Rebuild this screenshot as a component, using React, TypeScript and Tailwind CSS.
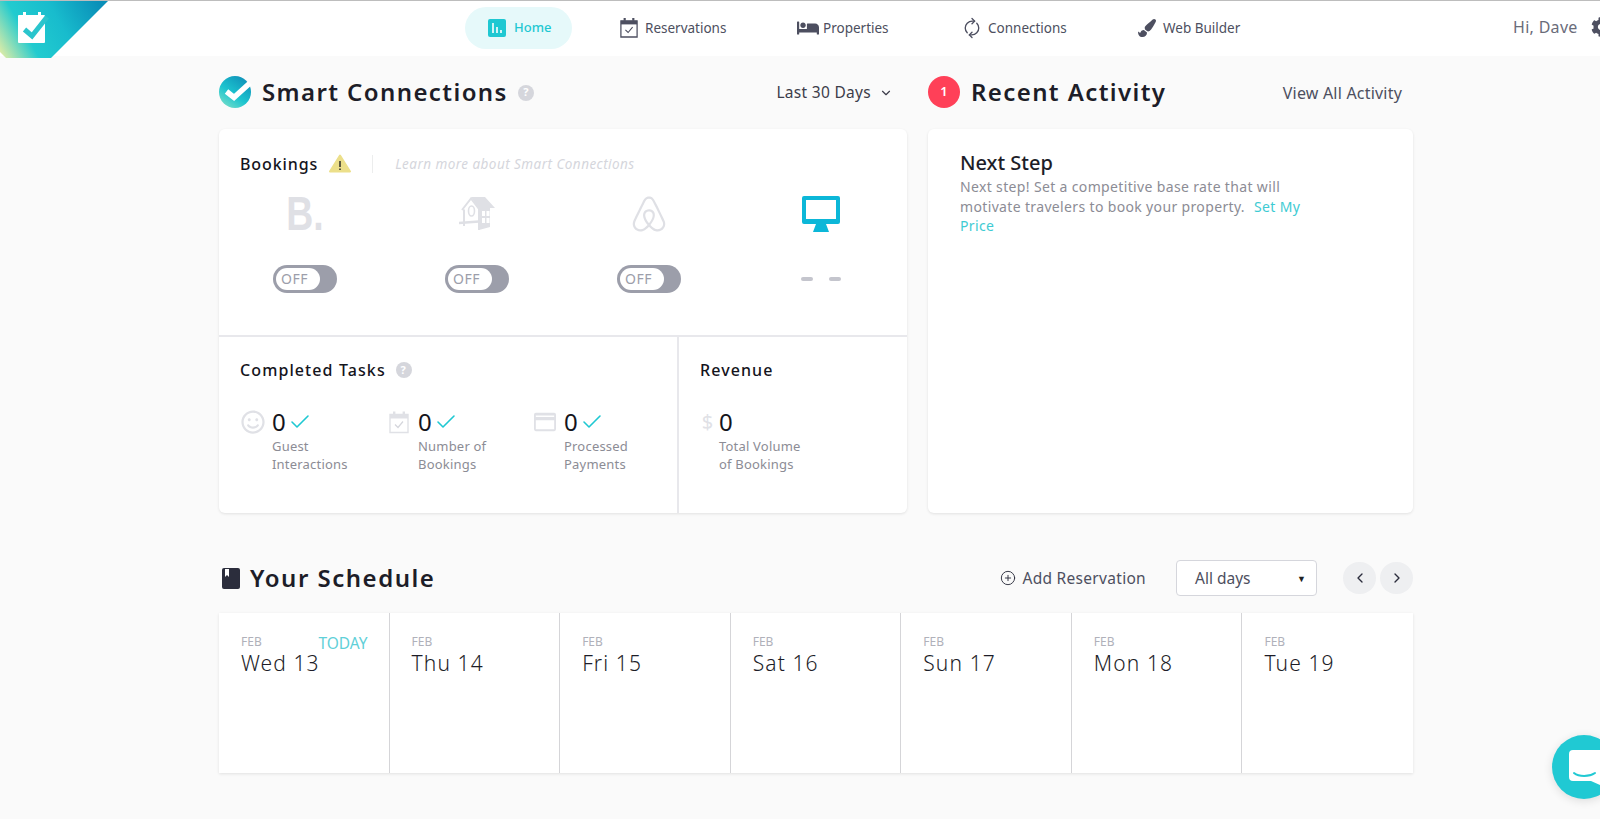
import React from "react";
import { FaAirbnb, FaBed, FaCog, FaPaintBrush, FaRegSmile } from "react-icons/fa";
import { Check, ChevronDown, ChevronLeft, ChevronRight, CirclePlus, RefreshCw } from "lucide-react";

const Help = ({ size = "w-4 h-4 text-[11px]" }: { size?: string }) => (
  <span className={`${size} rounded-full bg-[#d5d6dc] text-white font-bold flex items-center justify-center`}>?</span>
);

const CalIcon = ({ color, check }: { color: string; check: string }) => (
  <svg viewBox="0 0 20 22" className="w-full h-full">
    <path d="M4 0h2.4v3H4zM13.6 0H16v3h-2.4z" fill={color} />
    <path d="M1 3h18v18H1z" fill="none" stroke={color} strokeWidth="1.4" />
    <path d="M1 3h18v4H1z" fill={color} />
    <path d="M6 13l3 3 5-6" fill="none" stroke={check} strokeWidth="1.2" />
  </svg>
);

const Toggle = () => (
  <div className="w-16 h-7 rounded-full bg-[#9c9eaa] p-[3px] flex">
    <div className="w-[44px] h-[22px] rounded-full bg-white text-[#9c9eaa] text-[14px] leading-[22px] pl-[5px] tracking-[0.5px]">OFF</div>
  </div>
);

const Stat = ({ icon, label }: { icon: React.ReactNode; label: [string, string] }) => (
  <div className="flex gap-[7px]">
    <div className="w-[24px] h-[24px] flex items-center justify-center text-[#e0e1e6] mt-[1px]">{icon}</div>
    <div>
      <div className="flex items-center h-[26px] text-[24px] leading-[26px] text-[#14141c]">
        0
        <Check className="w-[24px] h-[24px] ml-[2px] text-[#1fc8d2]" strokeWidth={1.6} />
      </div>
      <div className="text-[13px] leading-[18px] tracking-[0.2px] text-[#8c8c95] mt-[2px] whitespace-nowrap">
        {label[0]}
        <br />
        {label[1]}
      </div>
    </div>
  </div>
);

const days = ["Wed 13", "Thu 14", "Fri 15", "Sat 16", "Sun 17", "Mon 18", "Tue 19"];

const Logo = () => (
  <svg viewBox="0 0 108 57" className="w-[108px] h-[57px] shrink-0">
    <defs>
      <linearGradient id="lg" gradientUnits="userSpaceOnUse" x1="0" y1="50" x2="95" y2="-5">
        <stop offset="0" stopColor="#d8eba8" />
        <stop offset="0.28" stopColor="#22cbcf" />
        <stop offset="0.6" stopColor="#18bccd" />
        <stop offset="1" stopColor="#0a8fb8" />
      </linearGradient>
    </defs>
    <path d="M0 0H108L59 49L51 57H6L0 51Z" fill="url(#lg)" />
    <path d="M20 14h3v-3h3v3h12v-3h3v3h3a1 1 0 0 1 1 1v26a1 1 0 0 1-1 1H19a1 1 0 0 1-1-1V15a1 1 0 0 1 1-1z" fill="#fff" />
    <path d="M24.5 28.5L32 35L47 16" fill="none" stroke="#2ac5cd" strokeWidth="5" />
  </svg>
);

const NavItem = ({ icon, label, w }: { icon: React.ReactNode; label: string; w: string }) => (
  <div className={`flex items-center gap-[7px] text-[13.5px] text-[#4d4f60] ${w}`}>
    {icon}
    <span>{label}</span>
  </div>
);

export default function App() {
  return (
    <div className="h-[819px] overflow-hidden relative bg-[#fafafa] font-['Noto_Sans',sans-serif]">
      <header className="h-[56px] bg-white border-t border-[#bdbdbd] flex items-start">
        <Logo />
        <nav className="ml-[357px] mt-[6px] flex items-center h-[42px]">
          <div className="w-[107px] h-[42px] rounded-full bg-[#e6f9fa] flex items-center pl-[23px] gap-[8px] text-[13px] font-medium text-[#1fc8d2]">
            <svg viewBox="0 0 18 18" className="w-[18px] h-[18px]">
              <rect width="18" height="18" rx="2" fill="#1fc8d2" />
              <path d="M5 4v10M9 8v6M13 11v3" stroke="#fff" strokeWidth="1.6" />
            </svg>
            <span>Home</span>
          </div>
          <NavItem w="ml-[48px] w-[177px]" label="Reservations" icon={<span className="w-[18px] h-[20px] block"><CalIcon color="#4d4f60" check="#4d4f60" /></span>} />
          <NavItem w="w-[166px]" label="Properties" icon={<FaBed className="w-[22px] h-[18px] -mr-[3px]" />} />
          <NavItem w="w-[175px]" label="Connections" icon={<RefreshCw className="w-[18px] h-[18px] -rotate-45" strokeWidth={1.8} />} />
          <NavItem w="" label="Web Builder" icon={<FaPaintBrush className="w-[18px] h-[18px]" />} />
        </nav>
        <div className="absolute left-[1513px] top-[6px] h-[42px] flex items-center gap-[13px] text-[16px] tracking-[0.3px] text-[#6a6c7a] whitespace-nowrap">
          <span>Hi, Dave</span>
          <FaCog className="w-[20px] h-[20px] text-[#4d4f60] shrink-0" />
        </div>
      </header>

      <main className="ml-[219px] w-[1194px]">
        <div className="flex gap-[21px]">
          <section className="w-[688px]">
            <div className="h-[73px] flex items-center">
              <svg viewBox="0 0 32 32" className="w-[32px] h-[32px] overflow-visible -mt-[2px]">
                <defs>
                  <linearGradient id="sc" x1="0.1" y1="1" x2="0.8" y2="0">
                    <stop offset="0" stopColor="#7fe0c8" />
                    <stop offset="0.45" stopColor="#1cc4cf" />
                    <stop offset="1" stopColor="#0f8fb8" />
                  </linearGradient>
                </defs>
                <circle cx="16" cy="16" r="16" fill="url(#sc)" />
                <path d="M7.5 15.5L15 21.5L31 7" fill="none" stroke="#fff" strokeWidth="5.5" />
              </svg>
              <h1 className="ml-[11px] -mt-[2px] text-[24px] font-semibold tracking-[1.4px] text-[#1d1d28]">Smart Connections</h1>
              <Help size="ml-[10px] w-4 h-4 text-[11px]" />
              <div className="ml-auto mr-[14px] flex items-center gap-[8px] text-[15.5px] text-[#3c3d4a] tracking-[0.3px]">
                Last 30 Days <ChevronDown className="w-[14px] h-[14px]" />
              </div>
            </div>
            <div className="h-[384px] bg-white rounded-[6px] shadow-[0_1px_3px_rgba(0,0,0,0.1)] flex flex-col">
              <div className="h-[208px] border-b-2 border-[#e8e8ec] shrink-0">
                <div className="flex items-center pl-[21px] pt-[23px] h-[46px]">
                  <span className="text-[16px] font-medium text-[#14141c] tracking-[0.9px]">Bookings</span>
                  <svg viewBox="0 0 22 19" className="ml-[11px] w-[22px] h-[19px]">
                    <path d="M11 1.5L21 17.5H1Z" fill="#ecdf8a" stroke="#ecdf8a" strokeWidth="2" strokeLinejoin="round" />
                    <path d="M11 7v6M11 14.5v1.5" stroke="#222" strokeWidth="1.4" />
                  </svg>
                  <span className="ml-[21px] h-[18px] w-px bg-[#eceded]" />
                  <span className="ml-[22px] mt-[2px] text-[13.5px] italic text-[#d5d6dc] tracking-[0.45px]">Learn more about Smart Connections</span>
                </div>
                <div className="grid grid-cols-4 mt-[19px] justify-items-center">
                  <div className="h-[40px] flex items-center justify-center text-[48px] font-bold text-[#dfe0e5] font-['Liberation_Sans',sans-serif] scale-x-[0.78] leading-none">B.</div>
                  <div className="h-[40px] flex items-center justify-center">
                    <svg viewBox="0 0 36 34" className="w-[36px] h-[34px]">
                      <path d="M12 0H26L36 11H31V30L20 33V12Z" fill="#dfe0e5" />
                      <path d="M23 14h3v5h-3zM27.5 14h3v5h-3zM23 21h3v5h-3zM27.5 21h3v5h-3z" fill="#fff" />
                      <path d="M3 13L12 1.5L20 12V33M5 12.5V29" fill="none" stroke="#dfe0e5" strokeWidth="2" />
                      <ellipse cx="12.5" cy="14" rx="3" ry="5" fill="none" stroke="#dfe0e5" strokeWidth="1.6" />
                      <path d="M0 26L20 24.5" stroke="#dfe0e5" strokeWidth="2.4" />
                    </svg>
                  </div>
                  <div className="h-[40px] flex items-center justify-center">
                    <FaAirbnb className="w-[40px] h-[40px] text-[#dfe0e5]" />
                  </div>
                  <div className="h-[40px] flex items-center justify-center">
                    <svg viewBox="0 0 38 36" className="w-[38px] h-[36px]">
                      <path d="M2 0h34a2 2 0 0 1 2 2v24a2 2 0 0 1-2 2H24l3 8H11l3-8H2a2 2 0 0 1-2-2V2a2 2 0 0 1 2-2zm2 4v19h30V4z" fill="#0cb7d8" fillRule="evenodd" />
                    </svg>
                  </div>
                </div>
                <div className="grid grid-cols-4 mt-[31px] justify-items-center items-center h-[28px]">
                  <Toggle />
                  <Toggle />
                  <Toggle />
                  <div className="flex gap-[16px]">
                    <span className="w-[12px] h-[4px] rounded-full bg-[#c4c5cd]" />
                    <span className="w-[12px] h-[4px] rounded-full bg-[#c4c5cd]" />
                  </div>
                </div>
              </div>
              <div className="flex-1 flex">
                <div className="w-[460px] border-r-2 border-[#e8e8ec] pl-[21px] pt-[21px]">
                  <div className="flex items-center gap-[10px] text-[16px] font-medium text-[#14141c] tracking-[1.1px] h-[24px]">
                    Completed Tasks <Help />
                  </div>
                  <div className="grid grid-cols-[146px_146px_146px] mt-[27px] pl-[1px]">
                    <Stat icon={<FaRegSmile className="w-[24px] h-[24px]" />} label={["Guest", "Interactions"]} />
                    <Stat icon={<span className="w-[20px] h-[23px] block"><CalIcon color="#e0e1e6" check="#d5d6dc" /></span>} label={["Number of", "Bookings"]} />
                    <Stat
                      icon={
                        <svg viewBox="0 0 24 20" className="w-[22px] h-[20px]">
                          <path d="M2 0h20a2 2 0 0 1 2 2v16a2 2 0 0 1-2 2H2a2 2 0 0 1-2-2V2a2 2 0 0 1 2-2zm0 8v10h20V8zm0-5v1.5h20V3z" fill="#e0e1e6" fillRule="evenodd" />
                        </svg>
                      }
                      label={["Processed", "Payments"]}
                    />
                  </div>
                </div>
                <div className="flex-1 pl-[21px] pt-[21px]">
                  <div className="text-[16px] font-medium text-[#14141c] tracking-[1.1px] h-[24px] leading-[24px]">Revenue</div>
                  <div className="mt-[27px] pl-[1px]">
                    <div className="flex gap-[5px]">
                      <div className="w-[13px] h-[26px] flex items-center justify-center text-[#e0e1e6] text-[20px]">$</div>
                      <div>
                        <div className="h-[26px] text-[24px] leading-[26px] text-[#14141c]">0</div>
                        <div className="text-[13px] leading-[18px] tracking-[0.2px] text-[#8c8c95] mt-[2px] whitespace-nowrap">
                          Total Volume
                          <br />
                          of Bookings
                        </div>
                      </div>
                    </div>
                  </div>
                </div>
              </div>
            </div>
          </section>

          <section className="w-[485px]">
            <div className="h-[73px] flex items-center">
              <span className="-mt-[2px] w-[32px] h-[32px] rounded-full bg-[#ff4058] text-white text-[13px] font-semibold flex items-center justify-center">1</span>
              <h1 className="ml-[11px] -mt-[2px] text-[24px] font-semibold tracking-[1.4px] text-[#1d1d28]">Recent Activity</h1>
              <span className="ml-auto mr-[11px] text-[16px] text-[#4d4f60] tracking-[0.2px]">View All Activity</span>
            </div>
            <div className="h-[384px] bg-white rounded-[6px] shadow-[0_1px_3px_rgba(0,0,0,0.1)] pt-[21px] pl-[32px]">
              <div className="text-[20px] font-medium text-[#1d1d28] leading-[26px]">Next Step</div>
              <p className="w-[358px] mt-[1px] text-[14px] leading-[19.5px] tracking-[0.35px] text-[#8c8c95]">
                Next step! Set a competitive base rate that will motivate travelers to book your property.{" "}
                <span className="text-[#3ecbd3] ml-[5px]">Set My Price</span>
              </p>
            </div>
          </section>
        </div>

        <div className="mt-[47px] h-[53px] flex items-start">
          <div className="flex items-center h-[36px] w-full">
            <svg viewBox="0 0 18 21" className="ml-[3px] w-[18px] h-[21px]">
              <path d="M2 0h14a2 2 0 0 1 2 2v17a2 2 0 0 1-2 2H2a2 2 0 0 1-2-2V2a2 2 0 0 1 2-2z" fill="#2b2d3c" />
              <path d="M3 1h4v8L5 7 3 9z" fill="#fff" />
            </svg>
            <h2 className="ml-[10px] text-[24px] font-semibold tracking-[1.5px] text-[#1d1d28]">Your Schedule</h2>
            <div className="ml-auto flex items-center">
              <CirclePlus className="w-[16px] h-[16px] text-[#2b2d3c]" strokeWidth={1.4} />
              <span className="ml-[6px] pt-[1px] text-[15.5px] text-[#4d4f60] tracking-[0.3px]">Add Reservation</span>
              <div className="ml-[30px] w-[141px] h-[36px] bg-white border border-[#d5d6dc] rounded-[4px] flex items-center justify-between pl-[18px] pr-[10px] pt-[1px] text-[15.5px] text-[#4d4f60]">
                All days <span className="text-[9px] text-[#222]">▼</span>
              </div>
              <button className="ml-[26px] w-[33px] h-[32px] rounded-full bg-[#eeeff1] flex items-center justify-center">
                <ChevronLeft className="w-[16px] h-[16px] text-[#2b2d3c]" />
              </button>
              <button className="ml-[4px] w-[33px] h-[32px] rounded-full bg-[#eeeff1] flex items-center justify-center">
                <ChevronRight className="w-[16px] h-[16px] text-[#2b2d3c]" />
              </button>
            </div>
          </div>
        </div>

        <div className="h-[160px] bg-white shadow-[0_1px_3px_rgba(0,0,0,0.1)] grid grid-cols-7">
          {days.map((d, i) => (
            <div key={d} className={`pl-[22px] pr-[21px] pt-[22px] ${i < 6 ? "border-r border-[#d5d5d8]" : ""}`}>
              <div className="flex justify-between h-[15px]">
                <span className="text-[12px] leading-[14px] text-[#b0b1ba]">FEB</span>
                {i === 0 && <span className="text-[15.5px] leading-[16px] text-[#5fd0d8]">TODAY</span>}
              </div>
              <div className="text-[21px] font-light leading-[26px] text-[#1d1d28] tracking-[1.1px] whitespace-nowrap">{d}</div>
            </div>
          ))}
        </div>
      </main>

      <div className="absolute left-[1552px] top-[735px] w-[64px] h-[64px] rounded-full bg-[#20c9d3] shadow-[0_2px_10px_rgba(0,0,0,0.12)]">
        <svg viewBox="0 0 31 35" className="absolute left-[17px] top-[15px] w-[31px] h-[35px]">
          <path d="M4 0h27v35l-9-4H4a4 4 0 0 1-4-4V4a4 4 0 0 1 4-4z" fill="#fff" />
          <path d="M5 23c5 4 15 4 21 0" fill="none" stroke="#20c9d3" strokeWidth="2" strokeLinecap="round" />
        </svg>
      </div>
    </div>
  );
}
